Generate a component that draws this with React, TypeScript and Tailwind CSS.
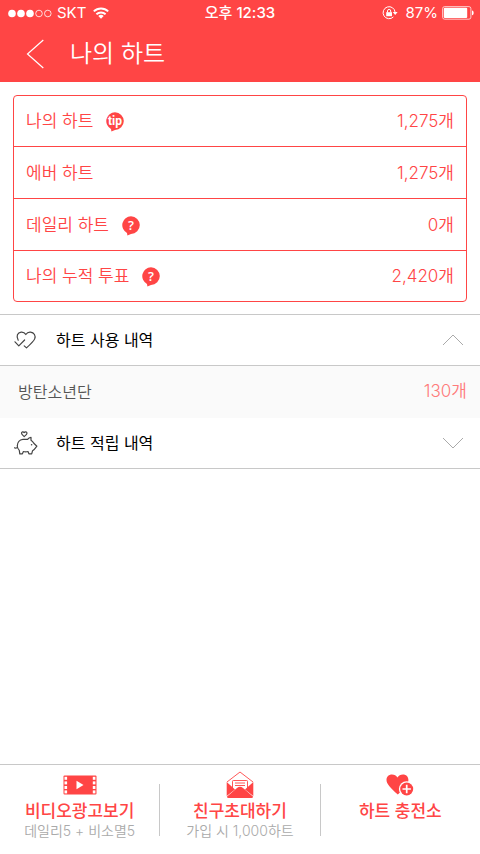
import React, { useState } from 'react';

interface HeartBalance {
  label: string;
  value: string;
  hint?: string;
}

interface HistoryItem {
  name: string;
  amount: string;
}

const balances: HeartBalance[] = [
  { label: '나의 하트', value: '1,275개', hint: 'tip' },
  { label: '에버 하트', value: '1,275개' },
  { label: '데일리 하트', value: '0개', hint: '?' },
  { label: '나의 누적 투표', value: '2,420개', hint: '?' },
];

const usedHearts: HistoryItem[] = [{ name: '방탄소년단', amount: '130개' }];

const StatusBar = () => (
  <div className="relative flex h-[26px] items-center justify-between pr-1.5 pl-2 text-[15px]">
    <div className="flex items-center gap-[5px]">
      <svg width="44" height="9" viewBox="0 0 44 9" fill="none" stroke="white">
        <g fill="white" stroke="none">
          <circle cx="4" cy="4.5" r="3.8" />
          <circle cx="13" cy="4.5" r="3.8" />
          <circle cx="22" cy="4.5" r="3.8" />
        </g>
        <circle cx="31" cy="4.5" r="3.3" strokeWidth="0.8" />
        <circle cx="39.8" cy="4.5" r="3.3" strokeWidth="0.8" />
      </svg>
      <span>SKT</span>
      <svg className="ml-0.5" width="16" height="12" viewBox="0 0 16 12" fill="none" stroke="white" strokeWidth="1.9">
        <path d="M.8 4.4a10.3 10.3 0 0 1 14.4 0" />
        <path d="M3.4 7.3a6.6 6.6 0 0 1 9.2 0" />
        <path d="M8 11.8 5.3 9.1a3.9 3.9 0 0 1 5.4 0z" fill="white" stroke="none" />
      </svg>
    </div>
    <span className="absolute left-1/2 -translate-x-1/2 font-medium">오후 12:33</span>
    <div className="flex items-center">
      <svg width="16" height="14" viewBox="0 0 16 14" fill="none" stroke="white" strokeWidth="1">
        <path d="M11.4 10.9a6 6 0 1 1 1.7-4.6" />
        <path d="M10.8 6h4.8l-2.4 2.9z" fill="white" stroke="none" />
        <rect x="4.2" y="6.2" width="5.8" height="4" fill="white" stroke="none" />
        <path d="M5.5 6.4V5a1.6 1.6 0 0 1 3.2 0v1.4" />
      </svg>
      <span className="ml-2">87%</span>
      <svg className="ml-1" width="32" height="14" viewBox="0 0 32 14">
        <rect x=".6" y=".6" width="28.3" height="12.6" rx="2" fill="none" stroke="white" strokeOpacity=".7" />
        <rect x="1.8" y="1.8" width="23.4" height="10.2" rx="1" fill="white" />
        <path d="M30 4.6c2.2.5 2.2 4.1 0 4.6z" fill="white" />
      </svg>
    </div>
  </div>
);

const HintBubble: React.FC<{ text: string; label: string }> = ({ text, label }) => (
  <button type="button" aria-label={`${label} 안내`} className="h-5 w-[18px]">
    <svg width="18" height="20" viewBox="0 0 18 20">
      <path d="M9 .3a8.8 8.8 0 0 0-4 16.6L5.4 19.6 9 17.9A8.8 8.8 0 0 0 9 .3z" fill="#ff4545" />
      <text
        x="9"
        y={text === '?' ? 13.5 : 12.5}
        textAnchor="middle"
        className={
          text === '?'
            ? "fill-white font-['Open_Sans'] text-[13px] font-semibold"
            : "fill-white font-['Roboto'] text-[12px] font-bold"
        }
      >
        {text}
      </text>
    </svg>
  </button>
);

const HeartCheckIcon = () => (
  <svg width="24" height="20" viewBox="0 0 24 20" fill="none" stroke="#444" strokeWidth="1.2" strokeLinecap="round" strokeLinejoin="round">
    <path d="M4.2 10.2C1.8 6 3.6 2.5 7.1 2.1c2-.2 3.7.7 4.7 2.4 1.1-1.7 2.7-2.6 4.7-2.4 3.700.4 5.400 3.600 4.200 6.800-.8 2-3 4.300-8.200 9l-2.300-2" />
    <path d="M1 11.800 4.800 15.800 10.600 10" />
  </svg>
);

const PiggyIcon = () => (
  <svg width="24" height="24" viewBox="0 0 24 24" fill="none" stroke="#444" strokeWidth="1.2" strokeLinecap="round" strokeLinejoin="round">
    <path d="M10.2 5.6C8.6 4.2 7.5 3.3 7.5 2.2c0-1.5 1.8-1.9 2.7-.6.9-1.3 2.8-.9 2.8.6 0 1.1-1.2 2-2.8 3.4z" />
    <path d="M8.9 8.4h4.7c.8-1.3 2-2 3.4-2.1v2.9c1.3.8 2.2 1.9 2.8 3.1l3.1 2.9-2.6 3.2c-.4.6-1 1-1.8 1.4l-.8 3h-2.8l-.9-2.3c-1.4.4-3.1.4-4.6 0l-1 2.3H5.8l-.5-3.4c-1.4-1.2-2.1-2.7-2-4.5.1-3.5 2.3-6.3 5.6-6.5z" />
    <path d="M3.3 16.5c-1 .7-2 .8-2.9.3" />
    <circle cx="17.6" cy="13.7" r=".8" fill="#444" stroke="none" />
  </svg>
);

const Chevron: React.FC<{ open: boolean }> = ({ open }) => (
  <svg width="22" height="12" viewBox="0 0 22 12" fill="none" stroke="#aaa" strokeWidth="1">
    <path d={open ? 'M1 11 11 1l10 10' : 'M1 1l10 10L21 1'} />
  </svg>
);

const FilmIcon = () => (
  <svg width="34" height="20" viewBox="0 0 34 20">
    <rect x=".5" y=".5" width="33" height="19" rx="1" fill="#ff4545" />
    <g fill="white">
      {[1.8, 6.4, 11, 15.4].map(y => (
        <React.Fragment key={y}>
          <rect x="1.5" y={y} width="2.6" height="3" />
          <rect x="29.8" y={y} width="2.6" height="3" />
        </React.Fragment>
      ))}
      <path d="M13.5 5.8v8.4l7-4.2z" />
    </g>
  </svg>
);

const MailIcon = () => (
  <svg width="28" height="28" viewBox="0 0 28 28">
    <path d="M1 11 14 1l13 10" fill="none" stroke="#ff4545" strokeWidth=".9" />
    <path d="M6.5 17v-6.7q0-.8.8-.8h13.4q.8 0 .8.8V17" fill="none" stroke="#ff4545" strokeWidth=".9" />
    <path d="M9 12h10M9 14.5h10" stroke="#ff4545" strokeWidth=".9" />
    <path d="M.7 11 9 18.5.7 25zM27.3 11 19 18.5l8.3 6.5z" fill="#ff4545" />
    <path d="M.8 25.7 11 17q3-2.7 6 0l10.2 8.7q-.5 1.3-1.7 1.3h-23Q1.3 27 .8 25.7z" fill="#ff4545" />
  </svg>
);

const HeartPlusIcon = () => (
  <svg width="28" height="22" viewBox="0 0 28 22">
    <path d="M11.8 20.6C4.5 13.6.5 10.2.5 6 .5 2.8 2.9.6 5.9.6c2.6 0 4.3 1.3 5.6 3C12.7 1.9 14.4.6 17 .6c3.1 0 5.4 2.2 5.4 5.4 0 4.2-3.6 7.7-10.6 14.6z" fill="#ff4545" />
    <circle cx="20.7" cy="15" r="7.8" fill="white" />
    <circle cx="20.7" cy="15" r="6.5" fill="#ff4545" />
    <path d="M20.7 10.8v8.4M16.5 15h8.4" stroke="white" strokeWidth="1.7" />
  </svg>
);

const actions = [
  { title: '비디오광고보기', note: '데일리5 + 비소멸5', icon: <FilmIcon /> },
  { title: '친구초대하기', note: '가입 시 1,000하트', icon: <MailIcon /> },
  { title: '하트 충전소', note: '', icon: <HeartPlusIcon /> },
];

interface HistorySectionProps {
  title: string;
  icon: React.ReactNode;
  items: HistoryItem[];
  defaultOpen?: boolean;
}

const HistorySection: React.FC<HistorySectionProps> = ({ title, icon, items, defaultOpen = false }) => {
  const [open, setOpen] = useState(defaultOpen);

  return (
    <section>
      <button
        type="button"
        aria-expanded={open}
        onClick={() => setOpen(!open)}
        className="flex h-[51px] w-full items-center border-b border-[#c8c8c8] pr-4 pl-[14px] text-base text-black"
      >
        {icon}
        <span className="ml-[18px] flex-1 text-left">{title}</span>
        <Chevron open={open} />
      </button>
      {open && (
        <ul className="bg-[#fafafa]">
          {items.map(item => (
            <li key={item.name} className="flex h-[52px] items-center justify-between pr-[13px] pl-[18px] font-[350]">
              <span className="text-base text-[#555]">{item.name}</span>
              <span className="text-[17px] text-[#ff7b7b]">{item.amount}</span>
            </li>
          ))}
        </ul>
      )}
    </section>
  );
};

const App: React.FC = () => {
  return (
    <div className="flex min-h-screen flex-col bg-white font-['Inter','Noto_Sans_CJK_KR',sans-serif]">
      <header className="bg-[#ff4545] text-white">
        <StatusBar />
        <div className="flex h-14 items-center pl-[26px]">
          <button type="button" aria-label="뒤로">
            <svg width="18" height="30" viewBox="0 0 18 30" fill="none" stroke="white" strokeWidth="1.2">
              <path d="M17.3 1 1.5 15l15.8 14" />
            </svg>
          </button>
          <h1 className="ml-[26px] text-2xl font-[350]">나의 하트</h1>
        </div>
      </header>

      <main className="flex-1">
        {/* Balances */}
        <dl className="mx-[13px] mt-[13px] mb-3 rounded border border-[#ff4545] text-[17px] font-[350] text-[#ff4545]">
          {balances.map(({ label, value, hint }) => (
            <div
              key={label}
              className="flex h-[52px] items-center justify-between border-b border-[#ff4545] px-3 pt-0.5 first:h-[51px] last:h-[50px] last:border-b-0"
            >
              <dt className="flex items-center gap-[13px]">
                {label}
                {hint && <HintBubble text={hint} label={label} />}
              </dt>
              <dd>{value}</dd>
            </div>
          ))}
        </dl>

        {/* History */}
        <div className="border-t border-[#c8c8c8]">
          <HistorySection title="하트 사용 내역" icon={<HeartCheckIcon />} items={usedHearts} defaultOpen />
          <HistorySection title="하트 적립 내역" icon={<PiggyIcon />} items={[]} />
        </div>
      </main>

      <footer className="flex h-[90px] items-center border-t border-[#c8c8c8]">
        {actions.map(({ title, note, icon }) => (
          <div key={title} className="flex h-13 flex-1 items-center justify-center border-l border-[#c8c8c8] first:border-l-0">
            <button type="button" className="flex h-[82px] flex-col items-center">
              <span className="flex h-8 items-center">{icon}</span>
              <span className="text-[17px] leading-5 font-medium text-[#ff4545]">{title}</span>
              <span className="text-sm leading-5 font-[350] text-[#aaa]">{note}</span>
            </button>
          </div>
        ))}
      </footer>
    </div>
  );
};

export default App;
